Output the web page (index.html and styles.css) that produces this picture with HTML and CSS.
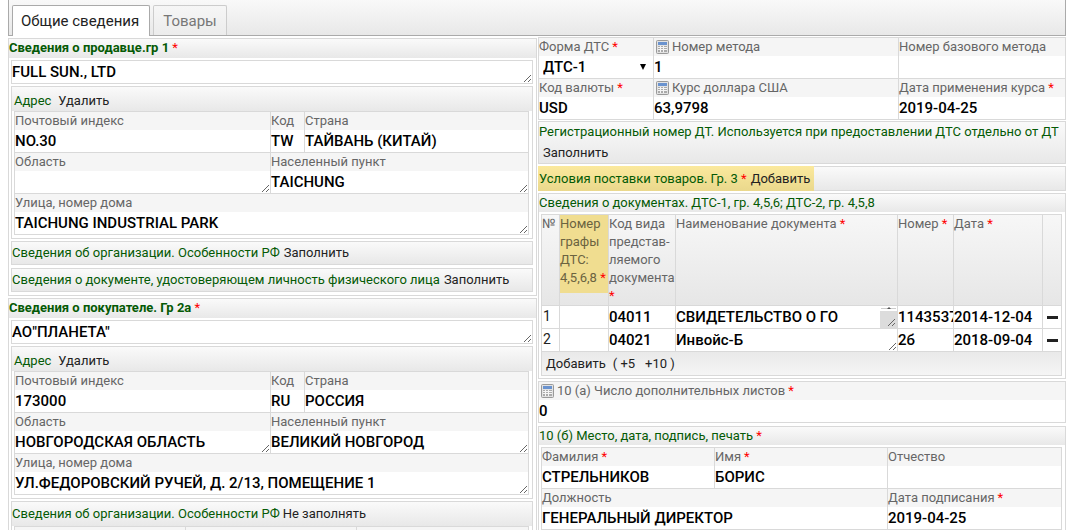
FILE: index.html
```html
<!DOCTYPE html>
<html lang="ru">
<head>
<meta charset="utf-8">
<title>ДТС</title>
<link rel="stylesheet" href="styles.css">
</head>
<body>
<svg class="defs" aria-hidden="true">
  <symbol id="calc" viewBox="0 0 13 14">
    <rect x=".5" y=".5" width="12" height="13" rx="1" fill="#e2e2e2" stroke="#999"/>
    <rect x="2" y="2" width="9" height="3" fill="#6a93cf"/>
    <path d="M2 6h9v6H2z" fill="#f4f4f4"/>
    <path d="M2 6h2v1H2zm3 0h2v1H5zm3 0h3v1H8zM2 8h2v1H2zm3 0h2v1H5zm3 0h3v1H8zm-6 2h2v2H2zm3 0h2v2H5zm3 0h3v2H8z" fill="#aaa"/>
  </symbol>
</svg>
<div class="app">
  <nav class="tabs">
    <button class="tab active" type="button">Общие сведения</button>
    <button class="tab" type="button">Товары</button>
  </nav>
  <main class="columns">
    <div class="col left">
      <section class="panel">
        <h2 class="head title">Сведения о продавце.гр 1 <i class="req">*</i></h2>
        <div class="body">
          <textarea class="value boxed" aria-label="Наименование продавца">FULL SUN., LTD</textarea>
          <section class="sub">
            <div class="head tall"><h3>Адрес</h3><button type="button">Удалить</button></div>
            <div class="grid address">
              <label class="cell"><span>Почтовый индекс</span><input class="value" value="NO.30"></label>
              <label class="cell"><span>Код</span><input class="value" value="TW"></label>
              <label class="cell"><span>Страна</span><input class="value" value="ТАЙВАНЬ (КИТАЙ)"></label>
              <label class="cell"><span>Область</span><textarea class="value"></textarea></label>
              <label class="cell span2"><span>Населенный пункт</span><textarea class="value">TAICHUNG</textarea></label>
              <label class="cell full"><span>Улица, номер дома</span><textarea class="value">TAICHUNG INDUSTRIAL PARK</textarea></label>
            </div>
          </section>
          <section class="line"><h3>Сведения об организации. Особенности РФ</h3><button type="button">Заполнить</button></section>
          <section class="line spaced"><h3>Сведения о документе, удостоверяющем личность физического лица</h3><button type="button">Заполнить</button></section>
        </div>
      </section>
      <section class="panel">
        <h2 class="head title">Сведения о покупателе. Гр 2а <i class="req">*</i></h2>
        <div class="body">
          <textarea class="value boxed" aria-label="Наименование покупателя">АО"ПЛАНЕТА"</textarea>
          <section class="sub">
            <div class="head tall"><h3>Адрес</h3><button type="button">Удалить</button></div>
            <div class="grid address">
              <label class="cell"><span>Почтовый индекс</span><input class="value" value="173000"></label>
              <label class="cell"><span>Код</span><input class="value" value="RU"></label>
              <label class="cell"><span>Страна</span><input class="value" value="РОССИЯ"></label>
              <label class="cell"><span>Область</span><textarea class="value">НОВГОРОДСКАЯ ОБЛАСТЬ</textarea></label>
              <label class="cell span2"><span>Населенный пункт</span><textarea class="value">ВЕЛИКИЙ НОВГОРОД</textarea></label>
              <label class="cell full"><span>Улица, номер дома</span><textarea class="value">УЛ.ФЕДОРОВСКИЙ РУЧЕЙ, Д. 2/13, ПОМЕЩЕНИЕ 1</textarea></label>
            </div>
          </section>
          <section class="sub org">
            <div class="head tall"><h3>Сведения об организации. Особенности РФ</h3><button type="button">Не заполнять</button></div>
            <div class="grid thirds"><div class="cell"></div><div class="cell"></div><div class="cell"></div></div>
          </section>
        </div>
      </section>
    </div>

    <div class="col right">
      <div class="grid method">
        <label class="cell"><span>Форма ДТС <i class="req">*</i></span><select class="value"><option>ДТС-1</option></select></label>
        <label class="cell"><span><svg class="calc"><use href="#calc"/></svg>Номер метода</span><input class="value" value="1"></label>
        <label class="cell"><span>Номер базового метода</span><input class="value"></label>
        <label class="cell"><span>Код валюты <i class="req">*</i></span><input class="value" value="USD"></label>
        <label class="cell"><span><svg class="calc"><use href="#calc"/></svg>Курс доллара США</span><input class="value" value="63,9798"></label>
        <label class="cell"><span>Дата применения курса <i class="req">*</i></span><input class="value" value="2019-04-25"></label>
      </div>
      <section class="line two"><h3>Регистрационный номер ДТ. Используется при предоставлении ДТС отдельно от ДТ</h3><button type="button">Заполнить</button></section>
      <section class="line terms"><div class="mark"><h3>Условия поставки товаров. Гр. 3 <i class="req">*</i></h3><button type="button">Добавить</button></div></section>
      <section class="panel docs">
        <h3 class="head">Сведения о документах. ДТС-1, гр. 4,5,6; ДТС-2, гр. 4,5,8</h3>
        <div class="body">
          <table>
            <colgroup><col class="c-n"><col class="c-gr"><col class="c-kind"><col><col class="c-num"><col class="c-date"><col class="c-del"></colgroup>
            <thead>
              <tr>
                <th>№</th>
                <th><div class="hl">Номер графы ДТС: 4,5,6,8 <i class="req">*</i></div></th>
                <th>Код вида представ-<br>ляемого документа <i class="req">*</i></th>
                <th>Наименование документа <i class="req">*</i></th>
                <th>Номер <i class="req">*</i></th>
                <th>Дата <i class="req">*</i></th>
                <th></th>
              </tr>
            </thead>
            <tbody>
              <tr>
                <td>1</td>
                <td><input class="value" aria-label="Номер графы"></td>
                <td><input class="value" aria-label="Код вида" value="04011"></td>
                <td><div class="scrolling"><textarea class="value" aria-label="Наименование">СВИДЕТЕЛЬСТВО О ГО</textarea><svg class="scroller" viewBox="0 0 17 22"><path d="M1 2.5h15" stroke="#ccc"/><path d="M7 3l2-2 2 2z" fill="#555"/><path d="M0 5h17v17H0z" fill="#dcdcdc"/><path d="M8 20l7-7M12 20l3-3" stroke="#666"/></svg></div></td>
                <td><input class="value" aria-label="Номер" value="1143537"></td>
                <td><input class="value" aria-label="Дата" value="2014-12-04"></td>
                <td><button class="del" type="button" aria-label="Удалить строку"></button></td>
              </tr>
              <tr>
                <td>2</td>
                <td><input class="value" aria-label="Номер графы"></td>
                <td><input class="value" aria-label="Код вида" value="04021"></td>
                <td><textarea class="value" aria-label="Наименование">Инвойс-Б</textarea></td>
                <td><input class="value" aria-label="Номер" value="2б"></td>
                <td><input class="value" aria-label="Дата" value="2018-09-04"></td>
                <td><button class="del" type="button" aria-label="Удалить строку"></button></td>
              </tr>
            </tbody>
          </table>
          <div class="add"><button type="button">Добавить</button><span class="more">( <button type="button">+5</button><button type="button">+10</button> )</span></div>
        </div>
      </section>
      <div class="grid sheets">
        <label class="cell"><span><svg class="calc"><use href="#calc"/></svg>10 (а) Число дополнительных листов <i class="req">*</i></span><input class="value" value="0"></label>
      </div>
      <section class="panel sign">
        <h3 class="head">10 (б) Место, дата, подпись, печать <i class="req">*</i></h3>
        <div class="body">
          <div class="grid thirds">
            <label class="cell"><span>Фамилия <i class="req">*</i></span><input class="value" value="СТРЕЛЬНИКОВ"></label>
            <label class="cell"><span>Имя <i class="req">*</i></span><input class="value" value="БОРИС"></label>
            <label class="cell"><span>Отчество</span><input class="value"></label>
            <label class="cell span2"><span>Должность</span><input class="value" value="ГЕНЕРАЛЬНЫЙ ДИРЕКТОР"></label>
            <label class="cell"><span>Дата подписания <i class="req">*</i></span><input class="value" value="2019-04-25"></label>
          </div>
        </div>
      </section>
    </div>
  </main>
</div>
</body>
</html>
```

FILE: styles.css
```css
* { box-sizing: border-box; }
body {
  margin: 0;
  background: #fff;
  color: #222;
  font: 13px/18px Roboto, "Noto Sans", sans-serif;
}
.app { height: 100vh; overflow: hidden; padding: 0 7px 0 8px; }
.defs { position: absolute; width: 0; height: 0; }
button, input, select, textarea { font: inherit; color: inherit; margin: 0; }
button { border: 0; padding: 0; background: none; white-space: nowrap; cursor: pointer; }
h2, h3 { margin: 0; font-size: 13px; font-weight: 400; color: #055a05; }
.req { color: #f00; font-style: normal; font-weight: 400; }

.tabs {
  display: flex;
  gap: 3px;
  height: 36px;
  padding: 5px 3px 0;
  border: solid #aaa;
  border-width: 0 1px 1px;
  background: linear-gradient(#f9f9f9, #e8e8e8);
}
.tab {
  height: 30px;
  padding: 0 9px;
  border: 1px solid #ccc;
  border-bottom: 0;
  border-radius: 2px 2px 0 0;
  background: linear-gradient(#f6f6f6, #ececec);
  color: #777;
  font-size: 15px;
}
.tab.active { height: 31px; padding: 0 10px 0 8px; background: #fff; border-color: #aaa; color: #222; }

.columns { display: grid; grid-template-columns: 529fr 528fr; gap: 1px; }
.col { display: flex; flex-direction: column; gap: 2px; min-width: 0; }
.left { padding-top: 2px; }
.right { padding-top: 1px; }

.panel, .sub, .line { border: 1px solid #d9d9d9; background: #fff; }
.head { height: 18px; background: linear-gradient(#fafafa, #e8e8e8); white-space: nowrap; }
.title { height: 19px; font-weight: 700; }
.body { display: flex; flex-direction: column; gap: 2px; padding: 2px 3px 3px 2px; }
.tall { display: flex; align-items: center; gap: 7px; height: 24px; padding: 3px 2px 0; }
.sub .grid { margin: 0 3px 3px 2px; }
.org .tall { gap: 3px; padding: 0; }
.line {
  display: flex;
  align-items: center;
  gap: 4px;
  height: 24px;
  background: linear-gradient(#fafafa, #e8e8e8);
  white-space: nowrap;
}
.spaced { margin-top: 1px; }

.grid { display: grid; border: solid #d9d9d9; border-width: 1px 0 0 1px; }
.address { grid-template-columns: 256fr 34fr 224fr; }
.method { grid-template-columns: 115fr 245fr 167fr; margin-bottom: -1px; }
.thirds { grid-template-columns: 173fr 173fr 174fr; }
.cell {
  display: flex;
  flex-direction: column;
  min-width: 0;
  min-height: 41px;
  border: solid #d9d9d9;
  border-width: 0 1px 1px 0;
}
.cell > span {
  display: flex;
  align-items: center;
  gap: 3px;
  height: 18px;
  background: #f5f5f5;
  color: #666;
  white-space: nowrap;
}
.org .cell { background: #f5f5f5; }
.span2 { grid-column: span 2; }
.full { grid-column: 1 / -1; }
.calc { width: 13px; height: 14px; margin-left: 2px; flex: none; }

.value {
  display: block;
  width: 100%;
  height: 22px;
  padding: 0;
  border: 0;
  border-radius: 0;
  outline: 0;
  background: #fff;
  color: #000;
  font-size: 15px;
  font-weight: 500;
  line-height: 22px;
}
textarea.value { overflow: hidden; resize: both; }
.value.boxed { height: 24px; border: 1px solid #d9d9d9; }
select.value {
  appearance: none;
  padding-left: 4px;
  background: #fff url("data:image/svg+xml,%3Csvg xmlns='http://www.w3.org/2000/svg' width='8' height='7'%3E%3Cpath d='M1 0h6L4 6z'/%3E%3C/svg%3E") no-repeat right 6px center;
}

.two { flex-direction: column; align-items: flex-start; gap: 3px; height: 43px; padding-top: 1px; }
.two button { margin-left: 4px; }
.terms { height: 25px; }
.mark {
  display: flex;
  align-items: center;
  gap: 4px;
  height: 25px;
  margin: -1px;
  padding: 0 4px 0 1px;
  background: linear-gradient(#fbe99d, #ead88c);
}

.docs .body { gap: 0; padding-bottom: 2px; }
table { width: 100%; table-layout: fixed; border-collapse: collapse; }
th, td { padding: 0; border: 1px solid #d9d9d9; text-align: left; font-weight: 400; vertical-align: top; }
th { height: 91px; color: #666; }
thead { background: linear-gradient(#f7f7f7, #e6e6e6); }
td { height: 23px; font-size: 14px; line-height: 20px; padding-left: 1px; }
td:nth-child(n + 2) { padding-left: 0; }
.hl { height: 78px; background: #f0dd90; color: #6b6340; }
.c-n { width: 18px; }
.c-gr { width: 49px; }
.c-kind { width: 67px; }
.c-num { width: 56px; }
.c-date { width: 89px; }
.c-del { width: 19px; }
.scrolling { position: relative; }
.scroller { position: absolute; right: 0; top: 0; width: 17px; height: 22px; background: #fff; }
.del { display: flex; align-items: center; justify-content: center; width: 100%; height: 22px; }
.del::before { content: ""; width: 11px; height: 3px; background: #222; }
.add {
  display: flex;
  gap: 7px;
  height: 24px;
  padding: 3px 4px;
  border: solid #d9d9d9;
  border-width: 0 1px 1px;
  background: linear-gradient(#e9e9e9, #f5f5f5);
}
.more button + button { margin-left: 10px; }
.sheets { margin-bottom: 1px; }
.sign { padding-bottom: 12px; }
```
